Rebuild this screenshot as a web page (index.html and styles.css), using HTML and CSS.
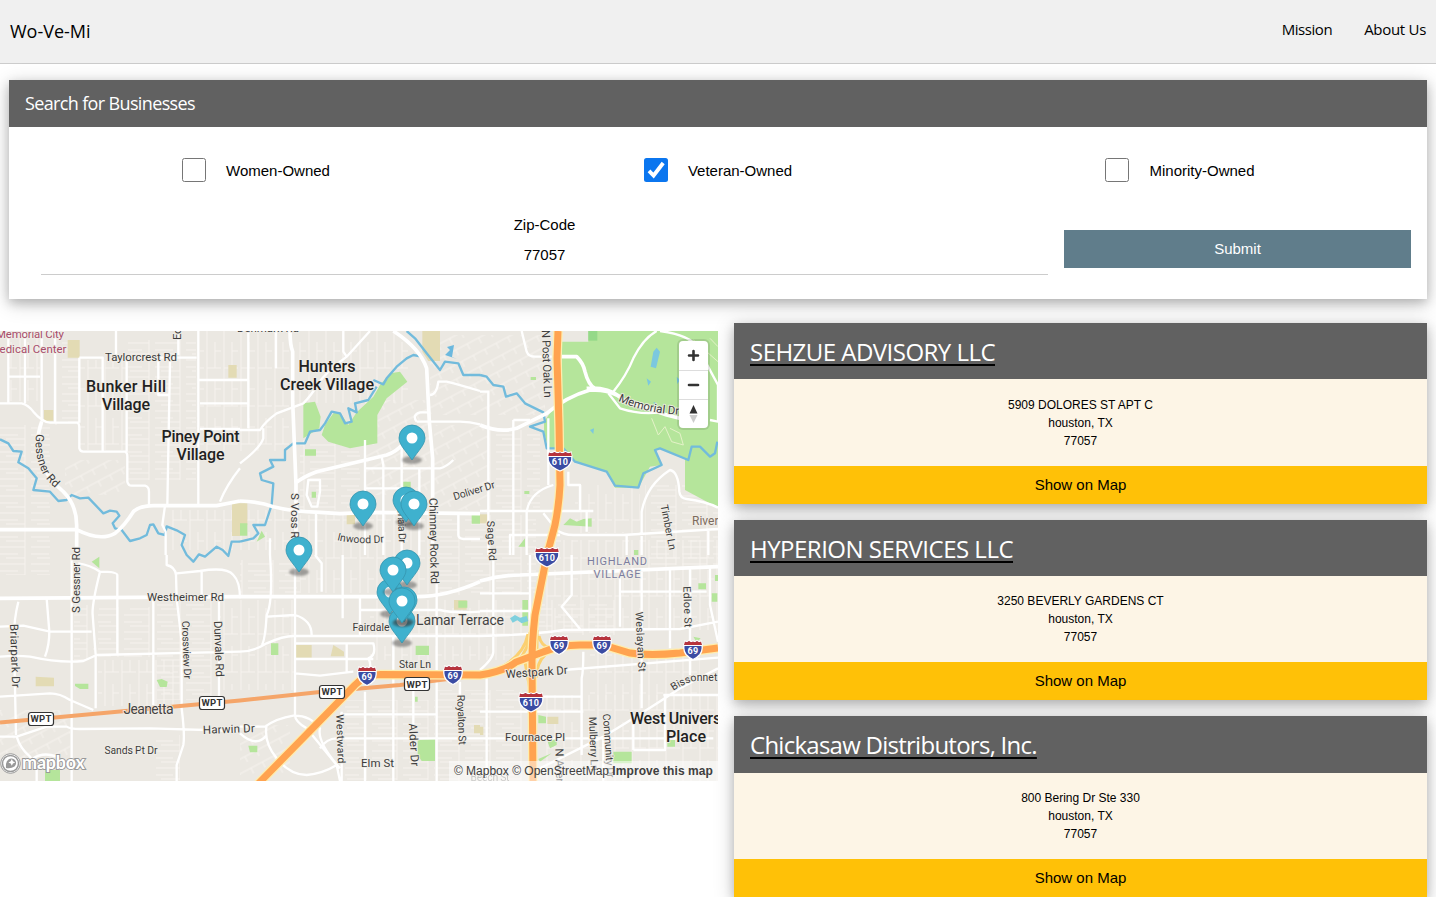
FILE: index.html
```html
<!DOCTYPE html>
<html lang="en">
<head>
<meta charset="utf-8">
<title>Wo-Ve-Mi</title>
<link rel="stylesheet" href="styles.css">
</head>
<body>
<nav class="topbar">
  <a class="brand">Wo-Ve-Mi</a>
  <div class="links"><a class="mission">Mission</a><a class="about">About Us</a></div>
</nav>

<section class="search card">
  <header class="search-head"><h2 class="search-title">Search for Businesses</h2></header>
  <form class="search-form">
    <div class="checks">
      <label class="check"><span class="box"></span><span class="check-text">Women-Owned</span></label>
      <label class="check"><span class="box on"><svg width="24" height="24" viewBox="0 0 24 24"><path d="M5 12.800l4.600 4.700L19.200 5" fill="none" stroke="#fff" stroke-width="3.800"/></svg></span><span class="check-text">Veteran-Owned</span></label>
      <label class="check"><span class="box"></span><span class="check-text">Minority-Owned</span></label>
    </div>
    <div class="ziprow">
      <div class="zip"><div class="ziplabel">Zip-Code</div><div class="zipvalue">77057</div></div>
      <div class="submit">Submit</div>
    </div>
  </form>
</section>

<main class="results">
<div class="map">
<svg class="mapsvg" width="718" height="450" viewBox="0 331 718 450">
<defs>
  <pattern id="v" width="17" height="38" patternUnits="userSpaceOnUse"><path d="M3 0V38M11 0V26M3 26H17M11 9H17" class="lane"/></pattern>
  <pattern id="h" width="31" height="17" patternUnits="userSpaceOnUse"><path d="M0 3H25M0 10H18M25 0V17M6 14H25" class="lane"/></pattern>
  <pattern id="s" width="13" height="13" patternUnits="userSpaceOnUse" patternTransform="rotate(-28)"><path d="M0 3H13M4 3V9" class="lane"/></pattern>
  <g id="pin"><ellipse cx="0" cy="22" rx="10" ry="4" class="pinshade"/><path d="M13 0C13 6.500 7 12 0 22C-7 12-13 6.500-13 0A13 13 0 0 1 13 0Z" class="pinbody"/><circle r="5.500" fill="#fff"/></g>
  <g id="i3"><path d="M-11-9Q-8-7.500-5.500-9.500Q-3-7.500 0-9Q3-7.500 5.500-9.500Q8-7.500 11-9Q14 0 8 5.500Q4 8.500 0 10Q-4 8.500-8 5.500Q-14 0-11-9Z" fill="#3b4ca3" stroke="#fff" stroke-width="1.300"/><path d="M-11-8.500Q-8-7-5.500-9Q-3-7 0-8.500Q3-7 5.500-9Q8-7 11-8.500L11.700-5H-11.700Z" fill="#b8333b"/><path d="M-12-4.500H12" stroke="#fff"/></g>
  <g id="i2"><path d="M-8-9Q-6-7.500-4-9.500Q-2-7.500 0-9Q2-7.500 4-9.500Q6-7.500 8-9Q11-1 7 4.500Q4 8 0 9.500Q-4 8-7 4.500Q-11-1-8-9Z" fill="#3b4ca3" stroke="#fff" stroke-width="1.300"/><path d="M-8-8.500Q-6-7-4-9Q-2-7 0-8.500Q2-7 4-9Q6-7 8-8.500L9-5H-9Z" fill="#b8333b"/><path d="M-9-4.500H9" stroke="#fff"/></g>
  <rect id="wpt" x="-12.500" y="-6.500" width="25" height="13" rx="2.500" fill="#fff" stroke="#333" stroke-width="1.200"/>
  <path id="gess" d="M36 434Q34 455 42 472Q46 481 60 492"/>
  <path id="mem" d="M618 401Q646 414 686 415"/>
  <path id="bis" d="M673 691Q687 682 696 681L732 681"/>
  <path id="inw" d="M337 540Q356 545 388 542"/>
</defs>
<rect y="331" width="718" height="450" fill="#ebe8e2"/>
<g class="fine">
  <rect x="9" y="331" width="31" height="70" fill="url(#v)"/><rect x="54" y="340" width="25" height="85" fill="url(#h)"/>
  <rect x="80" y="360" width="46" height="90" fill="url(#v)"/><rect x="128" y="340" width="68" height="140" fill="url(#h)"/>
  <rect x="0" y="425" width="50" height="150" fill="url(#h)"/><rect x="65" y="460" width="60" height="35" fill="url(#s)"/>
  <rect x="200" y="331" width="90" height="120" fill="url(#v)"/><rect x="298" y="331" width="112" height="72" fill="url(#v)"/>
  <rect x="300" y="440" width="60" height="70" fill="url(#h)"/><rect x="365" y="400" width="65" height="95" fill="url(#s)"/>
  <rect x="434" y="425" width="55" height="85" fill="url(#s)"/><rect x="430" y="335" width="115" height="80" fill="url(#s)"/>
  <rect x="300" y="515" width="135" height="78" fill="url(#v)"/><rect x="436" y="515" width="100" height="80" fill="url(#h)"/>
  <rect x="488" y="430" width="52" height="80" fill="url(#h)"/><rect x="575" y="485" width="65" height="48" fill="url(#v)"/>
  <rect x="645" y="485" width="73" height="80" fill="url(#h)"/><rect x="545" y="540" width="173" height="90" fill="url(#v)"/>
  <rect x="74" y="605" width="20" height="55" fill="url(#h)"/><rect x="98" y="607" width="54" height="50" fill="url(#h)"/>
  <rect x="98" y="660" width="80" height="46" fill="url(#v)"/><rect x="157" y="600" width="60" height="100" fill="url(#h)"/>
  <rect x="220" y="600" width="75" height="90" fill="url(#v)"/><rect x="0" y="710" width="70" height="55" fill="url(#s)"/>
  <rect x="156" y="735" width="24" height="45" fill="url(#h)"/><rect x="240" y="560" width="60" height="38" fill="url(#h)"/>
  <rect x="370" y="600" width="170" height="60" fill="url(#v)"/><rect x="437" y="690" width="90" height="91" fill="url(#h)"/>
  <rect x="535" y="600" width="80" height="35" fill="url(#h)"/><rect x="545" y="695" width="173" height="86" fill="url(#v)"/>
  <rect x="590" y="650" width="110" height="50" fill="url(#v)"/><rect x="345" y="700" width="90" height="80" fill="url(#h)"/>
  <rect x="240" y="725" width="50" height="50" fill="url(#s)"/><rect x="170" y="510" width="125" height="40" fill="url(#v)"/>
</g>
<g transform="translate(0 325) scale(.33333)"><path class="tan" d="M203 45h36v53h-36zM685 120h25v38h-25zM132 255h28v32h-28zM696 535h24v98h-24z"/></g>
<g transform="translate(240 325) scale(.33333)">
  <path class="tan" d="M547 18H600V108H565L547 80ZM0 535H22V600H0ZM320 570H345V598H320Z"/>
  <path class="park" d="M190 235L225 230L242 275L238 310L190 340ZM255 300L280 265L300 262L325 300L350 262L400 215L420 180L450 145L480 140L502 170L440 220L412 270V355L330 370L265 350L245 330ZM195 373H228V392H195ZM490 470H512V490H490ZM0 595H22V632H0ZM50 650L65 617L75 635ZM695 566H720V596H695ZM215 500H228V518H215Z"/>
</g>
<g transform="translate(480 325) scale(.33333)">
  <path class="park" d="M245 50H325V18H714V548L615 495V402L540 370L525 375L545 420L510 425L475 488H405L380 440L285 410L250 370L205 370L192 320V290L220 250L245 220ZM152 156H168V165H152ZM270 580L290 590L310 582L335 580V605L250 600ZM115 665L135 640V665ZM133 498H148V507H133ZM462 675H475V690H462Z"/>
  <path d="M325 18H352V47H325Z" fill="#95d989"/><path class="tan" d="M0 568H25V595H0Z"/>
  <path d="M520 80L530 68L540 80L528 130L512 125ZM500 160L513 170L505 182ZM590 155L600 165L592 177ZM330 315L342 310L340 327ZM520 230L532 236L525 242Z" fill="#7bc8df"/>
  <path d="M515 280L535 330L555 305L575 350L610 360L600 325L570 310M640 45L714 110M670 60V160M690 40L714 65" class="trail"/>
</g>
<g transform="translate(0 555) scale(.33333)"><path class="tan" d="M107 365L162 368V394H107Z"/><path class="park" d="M275 20L298 5V40ZM225 386H265V402H240L225 393ZM470 375L485 372L503 380L500 396H480ZM135 645H180V678H135Z"/></g>
<g transform="translate(240 555) scale(.33333)"><path class="tan" d="M168 270H215V308H168ZM280 270L312 290V304H272ZM642 135H680V164H642ZM702 510H720V535H702Z"/><path class="park" d="M93 265H115V300H93ZM527 272H567V300H527ZM655 137H682V158H655ZM533 555L585 553V618H545L533 600ZM25 572H52V592H30ZM525 425H533V440H525Z"/></g>
<g transform="translate(480 555) scale(.33333)"><path class="park" d="M127 135H144V212H127ZM655 85H678V103H655ZM695 115H712V140H695ZM175 480L198 485V505H175ZM203 560L230 550V570L210 580ZM562 555H585V575H562ZM640 245L662 250L650 262ZM175 612L215 595L180 620ZM400 590H455V625H400ZM705 60H714V78H705Z"/><path class="tan" d="M202 485H235V507H202ZM0 515H10V540H0Z"/><path d="M90 190L105 180L120 188L140 183L145 198L125 205L112 196L98 203Z" fill="#7fd0de"/></g>

<g class="water">
  <path transform="translate(0 325) scale(.33333)" d="M0 343L25 355L40 378L65 380L55 412L85 430L110 460L100 495L150 500L175 528L200 525L215 510L240 520L265 518L310 565L330 557L350 560L358 572L338 595L345 610L365 615L390 648L420 640L440 630L450 600L460 598L475 625L495 630L500 604L530 616L555 630L545 660L560 690L580 710L597 688L615 695L650 665L668 675L685 693L695 650H720"/>
  <path transform="translate(240 325) scale(.33333)" d="M500 18L525 40L560 85L600 135L615 110L655 115L670 150H720M545 95L520 90L500 100L470 125L440 160L430 178L400 165M410 185L385 225L345 235L350 262L325 250L335 290L315 295L300 265L275 260L255 295L240 315L210 320L195 355L160 355L135 375V405L90 405L100 425L60 445L65 465L100 475L95 540L75 600H40L55 625L40 640L0 650"/>
  <path transform="translate(480 325) scale(.33333)" d="M0 150L20 155L40 180L70 185L78 215L110 205L135 235L190 262L195 290L150 305L190 320L200 370L250 370L285 410L380 440L405 482L475 488L490 445L545 420L525 375L540 370L625 405L635 365H660L690 395L705 385L712 350"/>
</g>
<path d="M445 355L450 350L447 347L454 345L452 357L457 359Z" fill="#6bb8de"/>

<g class="road">
  <path transform="translate(0 325) scale(.33333)" d="M25 18V235M75 18V235M125 18V290M165 18V290M25 155H120M0 235H65Q85 240 100 260Q125 290 150 293H232Q238 295 238 310V370Q240 380 250 380H375Q382 382 382 395V470Q385 482 395 482H435Q447 485 447 500V540M238 98H308V380M238 98V293M348 18V90M380 98V380M475 98H590M510 110L502 540M595 18V540M595 165H720M600 235H720M535 18V90M495 542L487 600L497 620V690M660 530Q680 480 720 430M475 98V210H510M600 312H720"/>
  <path class="big" transform="translate(0 325) scale(.33333)" d="M125 290Q105 345 120 400Q140 460 190 500Q230 540 230 600V690M0 614H230Q300 650 345 625Q375 600 400 560Q420 542 460 542H650L720 528"/>
  <path transform="translate(240 325) scale(.33333)" d="M25 18V310M0 165H25M0 235H25M108 18V130M0 315H60Q75 290 110 265L190 235Q215 210 235 175Q260 140 320 95L390 18M0 415Q60 370 70 340V310M310 18V80L320 95M375 345V430H600Q620 425 640 405M375 430V690M425 395L430 420V690M485 350V690M538 430V690M570 210Q590 210 595 170H620Q660 180 720 198M530 290Q515 270 540 262H565M530 290H660Q690 290 720 298M205 465H240V500L232 545H215L200 510ZM228 565V690M375 490H490M655 566V630Q655 640 670 642H720M90 640V690"/>
  <path class="big" transform="translate(240 325) scale(.33333)" d="M150 18Q150 60 158 80V230L168 480V690M460 18Q540 70 560 130L568 290L578 400V690M165 475Q190 455 230 440L440 390Q470 380 490 355M0 528Q60 530 100 545Q160 560 240 562L300 566L390 562L720 566"/>
  <path transform="translate(480 325) scale(.33333)" d="M385 205L420 250Q480 270 540 262M540 18Q640 30 660 80L714 180V290L690 285M400 200Q440 150 460 100Q490 40 530 18M0 200H25V690M100 285V690M125 18L140 80Q145 95 165 95H215M100 285H150M0 558H340M205 280V480M220 480Q150 500 140 560V690M90 690V630H240M190 565L230 615Q250 630 280 630H430L714 612M485 690V560Q500 480 570 435Q595 440 598 500Q600 520 620 522Q680 530 714 548M265 440V480H300V555M440 630V690M320 560V620M685 615V690"/>
  <path class="big" transform="translate(480 325) scale(.33333)" d="M0 300Q60 325 110 310L200 265Q260 215 330 195Q400 195 430 225L560 270L640 290M245 95H290Q310 115 315 140Q325 180 345 190M320 190Q380 185 420 215"/>
  <path transform="translate(0 555) scale(.33333)" d="M215 0V678M55 140Q40 200 42 260L48 540M0 215L70 212L150 230H275M140 130L148 230Q148 270 135 305M0 305Q50 300 90 305Q180 325 250 318L290 300L720 290M235 25Q270 30 300 50Q275 150 278 180L287 300V460M300 50Q350 50 352 60V295M460 130V450M500 0V30Q525 35 528 60L530 130L545 260V460Q555 540 550 570L530 630V678M530 55L600 48Q680 35 700 60Q720 80 720 130M605 45V120M657 130V430M0 425L150 415Q180 415 210 435L280 465M0 545H50L140 515H200Q210 522 240 522L450 520L720 528M50 545Q60 580 90 605L110 640V678M100 610Q130 590 170 605"/>
  <path class="big" transform="translate(0 555) scale(.33333)" d="M0 130L720 125"/>
  <path transform="translate(240 555) scale(.33333)" d="M165 0V480Q165 500 200 520L290 630L300 678M90 0Q100 140 80 180Q75 260 65 270M0 290Q40 290 80 265Q130 243 160 243H720M80 185L165 180Q215 195 215 240M165 265H400Q410 300 385 310Q400 340 375 350M320 265V350M165 312H400M165 355L240 362L340 350M225 0L245 25V110M308 0V190M360 120V240M360 165H600Q640 175 720 170M460 240V678M590 80V678M375 410V678M305 470V678M520 400V510M660 380V430M300 478H590M240 580Q260 550 290 550H720M0 515H75Q110 490 160 482Q210 480 240 520Q230 560 300 640M80 510Q70 560 110 610Q150 660 200 660Q250 655 290 630M0 535Q50 580 80 540"/>
  <path class="big" transform="translate(240 555) scale(.33333)" d="M0 125H530Q620 125 720 80"/>
  <path transform="translate(480 555) scale(.33333)" d="M0 115H150M0 168H150M0 243Q150 240 250 225L600 222L714 200M150 0V250M275 0V120L245 155L300 222M420 50V215M485 50V460M420 110H680M570 40V280M630 40V360M690 40V150L714 260M310 290Q310 350 305 370V600M40 0V290Q40 310 0 345M250 345L714 308M714 340L600 400Q480 480 370 545L180 640M0 470H310M305 425H190M0 550H700M20 370V678M460 585V480M555 420V585H460M550 420H714M370 545V678"/>
  <path class="big" transform="translate(480 555) scale(.33333)" d="M0 78Q60 60 120 60L714 35"/>
</g>
<path class="pkwy" d="M0 722.500L240 700.500L320 692L400 685L480 675"/>
<path class="ramp" d="M528 634Q524 655 500 668M539 636Q541 646 550 648M545 655Q537 662 536 678M525 662L530 690M530 632Q529 650 518 660M537 630V650"/>
<g class="hwycase"><path d="M257 785L355 685Q364 675 380 674.500L480 675Q505 671 516 662L543 652Q560 645 580 645H603L630 653Q650 656 680 653L718 648"/><path d="M558 331L557 358L559 425L560 485Q559 505 555 525L547 555L535 615Q532 642 532 662L533 781"/></g>
<g class="hwy"><path d="M257 785L355 685Q364 675 380 674.500L480 675Q505 671 516 662L543 652Q560 645 580 645H603L630 653Q650 656 680 653L718 648"/><path d="M558 331L557 358L559 425L560 485Q559 505 555 525L547 555L535 615Q532 642 532 662L533 781"/></g>

<g class="lbl place">
  <text x="126" y="392" textLength="80">Bunker Hill</text><text x="126" y="410" textLength="48">Village</text>
  <text x="200.500" y="442" textLength="78">Piney Point</text><text x="200.500" y="460" textLength="48">Village</text>
  <text x="327" y="371.500" textLength="57">Hunters</text><text x="327" y="389.500" textLength="94">Creek Village</text>
  <text x="630" y="724" textLength="95" class="start">West Universi</text><text x="686" y="742" textLength="40">Place</text>
</g>
<g class="lbl hood"><text x="148.500" y="714" textLength="50">Jeanetta</text><text x="460" y="625" textLength="88">Lamar Terrace</text></g>
<g class="lbl poi"><text x="30" y="338" textLength="68">Memorial City</text><text x="28" y="352.500" textLength="77">Medical Center</text></g>
<g class="lbl high"><text x="617" y="565" textLength="60">HIGHLAND</text><text x="617" y="578" textLength="47">VILLAGE</text></g>
<text class="lbl river start" x="692" y="525">River Oaks</text>
<g class="lbl st">
  <text x="141" y="361" textLength="72">Taylorcrest Rd</text><text x="268" y="331.500" textLength="62">Denmark Rd</text>
  <text x="185.500" y="601" textLength="77">Westheimer Rd</text><text x="131" y="754" textLength="53" class="sm">Sands Pt Dr</text>
  <text transform="translate(229 733) rotate(-2)" textLength="52">Harwin Dr</text><text x="377.500" y="767" textLength="33">Elm St</text>
  <text x="371" y="631" textLength="37" class="sm">Fairdale</text><text x="415" y="667.500" textLength="32" class="sm">Star Ln</text>
  <text x="535" y="741" textLength="60">Fournace Pl</text><text x="490" y="781" textLength="39" opacity=".5" class="sm">Beech St</text>
  <text transform="translate(537 676) rotate(-4)" textLength="62">Westpark Dr</text>
  <text transform="translate(475 494) rotate(-17)" textLength="43" class="sm">Doliver Dr</text>
  <text transform="translate(80 580) rotate(-90)" textLength="66">S Gessner Rd</text>
  <text transform="translate(181 328) rotate(-90)" textLength="24">Echo</text>
  <text transform="translate(11 656) rotate(88)" textLength="64">Briarpark Dr</text>
  <text transform="translate(183 650) rotate(88)" textLength="58" class="sm">Crossview Dr</text>
  <text transform="translate(215 649) rotate(88)" textLength="56">Dunvale Rd</text>
  <text transform="translate(291 519) rotate(90)" textLength="52">S Voss Rd</text>
  <text transform="translate(398 517) rotate(88)" textLength="52" class="sm">Potomaia Dr</text>
  <text transform="translate(430 541) rotate(89)" textLength="86">Chimney Rock Rd</text>
  <text transform="translate(488 541) rotate(87)" textLength="40" class="sm">Sage Rd</text>
  <text transform="translate(543 364) rotate(88)" textLength="68">N Post Oak Ln</text>
  <text transform="translate(665 528) rotate(79)" textLength="46" class="sm">Timber Ln</text>
  <text transform="translate(684 607) rotate(88)" textLength="41" class="sm">Edloe St</text>
  <text transform="translate(637 642) rotate(87)" textLength="60" class="sm">Weslayan St</text>
  <text transform="translate(337 739) rotate(88)" textLength="49" class="sm">Westward</text>
  <text transform="translate(410 745) rotate(87)" textLength="43">Alder Dr</text>
  <text transform="translate(458 720) rotate(88)" textLength="50" class="sm">Royalton St</text>
  <text transform="translate(590 744) rotate(88)" textLength="54" class="sm">Mulberry Ln</text>
  <text transform="translate(605 746) rotate(86)" textLength="64" class="sm">Community Dr</text>
  <text transform="translate(556 773) rotate(88)" textLength="49">N Avenue</text>
  <g class="start"><text><textPath href="#gess" textLength="60">Gessner Rd</textPath></text><text><textPath href="#mem" textLength="63">Memorial Dr</textPath></text><text class="sm"><textPath href="#bis">Bissonnet</textPath></text><text class="sm"><textPath href="#inw">Inwood Dr</textPath></text></g>
</g>
<use href="#i3" x="560" y="461"/><use href="#i3" x="547" y="557"/><use href="#i3" x="531" y="702"/>
<use href="#i2" x="367" y="676"/><use href="#i2" x="453" y="675"/><use href="#i2" x="559" y="645"/><use href="#i2" x="602" y="645"/><use href="#i2" x="693" y="650"/>
<g class="shield"><text x="560" y="465">610</text><text x="547" y="561">610</text><text x="531" y="706">610</text><text x="367" y="680">69</text><text x="453" y="679">69</text><text x="559" y="649">69</text><text x="602" y="649">69</text><text x="693" y="654">69</text></g>
<use href="#wpt" x="41" y="719"/><use href="#wpt" x="212" y="703"/><use href="#wpt" x="332" y="692"/><use href="#wpt" x="417" y="684"/>
<g class="wlabel"><text x="41" y="722.300">WPT</text><text x="212" y="706.300">WPT</text><text x="332" y="695.300">WPT</text><text x="417" y="687.500">WPT</text></g>
<use href="#pin" x="412" y="438"/><use href="#pin" x="363" y="504"/><use href="#pin" x="406" y="500"/><use href="#pin" x="414" y="504"/><use href="#pin" x="299" y="550"/><use href="#pin" x="407" y="563"/><use href="#pin" x="390" y="592"/><use href="#pin" x="393" y="570"/><use href="#pin" x="402" y="621"/><use href="#pin" x="404" y="600"/><use href="#pin" x="402" y="601"/>
<g>
  <circle cx="10.500" cy="763.500" r="9.800" fill="#fff" stroke="#999" stroke-width="1"/>
  <circle cx="10.500" cy="763.500" r="8" fill="#fff" stroke="#999" stroke-width="1.500"/><path d="M6 768Q5.500 761 8.500 759.500A4.500 4.500 0 1 1 14.500 766.500Q11 769 6 768Z" fill="#999"/><path d="M11.800 759l1.100 2.300 2.300 1.100-2.300 1.100-1.100 2.300-1.100-2.300-2.300-1.100 2.300-1.100z" fill="#fff"/>
  <text class="mapbox" x="22" y="769" textLength="63">mapbox</text>
</g>
</svg>
<div class="zoomctl">
  <span class="zbtn"><svg width="29" height="29" viewBox="0 0 29 29"><path d="M10 14.500H19M14.500 10V19" class="zicon"/></svg></span>
  <span class="zbtn"><svg width="29" height="29" viewBox="0 0 29 29"><path d="M10 14H19" class="zicon"/></svg></span>
  <span class="zbtn"><svg width="29" height="29" viewBox="0 0 29 29"><path d="M10.500 13.500L14.500 5L18.500 13.500Z" fill="#333"/><path d="M10.500 15L14.500 23L18.500 15Z" fill="#ccc"/></svg></span>
</div>
<div class="attrib"><span class="copy">© Mapbox</span> <span class="copy">© OpenStreetMap</span> <b class="improve">Improve this map</b></div>
</div>

<div class="list">
  <article class="biz card"><header class="biz-head"><h3 class="name n1">SEHZUE ADVISORY LLC</h3></header><div class="addr">5909 DOLORES ST APT C<br>houston, TX<br>77057</div><div class="show">Show on Map</div></article>
  <article class="biz card"><header class="biz-head"><h3 class="name n2">HYPERION SERVICES LLC</h3></header><div class="addr">3250 BEVERLY GARDENS CT<br>houston, TX<br>77057</div><div class="show">Show on Map</div></article>
  <article class="biz card"><header class="biz-head"><h3 class="name n3">Chickasaw Distributors, Inc.</h3></header><div class="addr">800 Bering Dr Ste 330<br>houston, TX<br>77057</div><div class="show">Show on Map</div></article>
</div>
</main>
</body>
</html>
```
FILE: styles.css
```css
* { box-sizing: border-box; }
html, body { height: 100%; }
body { margin: 0; overflow: hidden; background: #fff; color: #000; font: 15px/22.5px "Liberation Sans", Arial, sans-serif; }
h2, h3 { margin: 0; font-weight: 400; }
.card { box-shadow: 0 4px 10px rgba(0,0,0,.2), 0 4px 20px rgba(0,0,0,.19); }

.topbar { height: 64px; padding: 0 10px; display: flex; justify-content: space-between; align-items: center; background: #f0f0f0; border-bottom: 1px solid #ccc; font-family: "Open Sans", "Noto Sans", sans-serif; }
.brand { font-size: 18px; line-height: 27px; }
.links { display: flex; gap: 32px; font-size: 15px; padding-bottom: 4px; }
.mission { letter-spacing: -.44px; }
.about { letter-spacing: -.3px; }

.search { margin: 16px 9px 0; height: 219px; background: #fff; }
.search-head { height: 47px; padding: 0 16px; display: flex; align-items: center; background: #616161; color: #fff; }
.search-title { font: 400 18px/27px "Open Sans", "Noto Sans", sans-serif; letter-spacing: -.64px; }
.search-form { padding: 0 16px; }
.checks { display: grid; grid-template-columns: repeat(3, 1fr); padding-top: 31px; }
.check { display: flex; justify-content: center; align-items: center; gap: 20px; height: 24px; line-height: 24px; }
.check-text { padding-top: 2px; }
.box { width: 24px; height: 24px; border: 1px solid #767676; border-radius: 2.500px; display: flex; }
.box.on { border: 0; background: #0b76ef; }
.ziprow { display: flex; margin-top: 32px; }
.zip { width: 1007px; margin: 0 16px; text-align: center; height: 61px; border-bottom: 1px solid #ccc; }
.zipvalue { padding-top: 7px; }
.submit { flex: 1; height: 38px; margin-top: 16px; line-height: 38px; text-align: center; background: #607d8b; color: #fff; }

.results { display: flex; align-items: flex-start; gap: 16px; padding-right: 9px; margin-top: 24px; }
.map { position: relative; width: 718px; height: 450px; margin-top: 8px; overflow: hidden; flex: none; }
.mapsvg { display: block; }
.list { flex: 1; display: flex; flex-direction: column; gap: 16px; }
.biz-head { height: 56.400px; padding: 0 16px; display: flex; align-items: center; background: #616161; color: #fff; }
.name { font: 400 24px/36px "Open Sans", "Noto Sans", sans-serif; text-decoration: underline #000 2px; text-underline-offset: 3px; text-decoration-skip-ink: none; padding-top: 2px; white-space: nowrap; }
.n1 { letter-spacing: -.53px; }
.n2 { letter-spacing: -.51px; }
.n3 { letter-spacing: -.74px; }
.addr { height: 86.200px; padding-top: 16.200px; background: #fdf5e6; text-align: center; font-size: 12px; line-height: 18px; }
.show { height: 38px; line-height: 38px; text-align: center; background: #ffc107; }

.zoomctl { position: absolute; top: 10px; right: 10px; width: 29px; border-radius: 4px; background: #fff; box-shadow: 0 0 0 2px rgba(0,0,0,.1); overflow: hidden; }
.zbtn { display: block; height: 29px; }
.zbtn + .zbtn { border-top: 1px solid #ddd; }
.zicon { fill: none; stroke: #333; stroke-width: 2.600; stroke-linecap: round; }
.attrib { position: absolute; right: 0; bottom: 0; height: 20px; padding: 0 5px; background: rgba(255,255,255,.5); font-size: 12px; line-height: 20px; color: #404040; white-space: nowrap; }
.improve { letter-spacing: .08px; }

.lane { fill: none; stroke: #f7f4ef; stroke-width: .9; }
.tan { fill: #e3dbb4; }
.park { fill: #b5e59b; }
.trail { fill: none; stroke: #e4f2c8; stroke-width: 3; }
.water path { fill: none; stroke: #72bbdc; stroke-width: 7; stroke-linejoin: round; }
.road path { fill: none; stroke: #fff; stroke-width: 7; stroke-linejoin: round; }
.road .big { stroke-width: 11; }
.pkwy { fill: none; stroke: #f5a569; stroke-width: 4; }
.ramp { fill: none; stroke: #fbd071; stroke-width: 3; }
.hwycase { fill: none; stroke: #ffedac; stroke-width: 9.500; }
.hwy { fill: none; stroke: #ffa350; stroke-width: 7; }
.lbl { font-family: Roboto, sans-serif; text-anchor: middle; paint-order: stroke; stroke: rgba(240,237,231,.85); stroke-width: 2px; stroke-linejoin: round; }
.start { text-anchor: start; }
.place { font-size: 16px; font-weight: 500; fill: #222; }
.hood { font-size: 14px; fill: #444; }
.poi { font-size: 11.500px; fill: #a84d6b; }
.high { font-size: 11px; fill: #7b7d9f; }
.river { font-size: 12px; fill: #7d6b5d; }
.st { font-size: 11.500px; fill: #3c3c3c; }
.sm { font-size: 10.500px; }
.shield, .wlabel { font: bold 9px Roboto, sans-serif; fill: #fff; text-anchor: middle; letter-spacing: .3px; }
.wlabel { fill: #333; font-size: 9.500px; }
.pinbody { fill: #3fb1ce; stroke: #3594ad; stroke-width: .8; }
.pinshade { fill: #333; opacity: .42; filter: blur(1.200px); }
.mapbox { font: bold 18px Lato, sans-serif; fill: #fff; stroke: #999; stroke-width: 2px; paint-order: stroke; }
```
